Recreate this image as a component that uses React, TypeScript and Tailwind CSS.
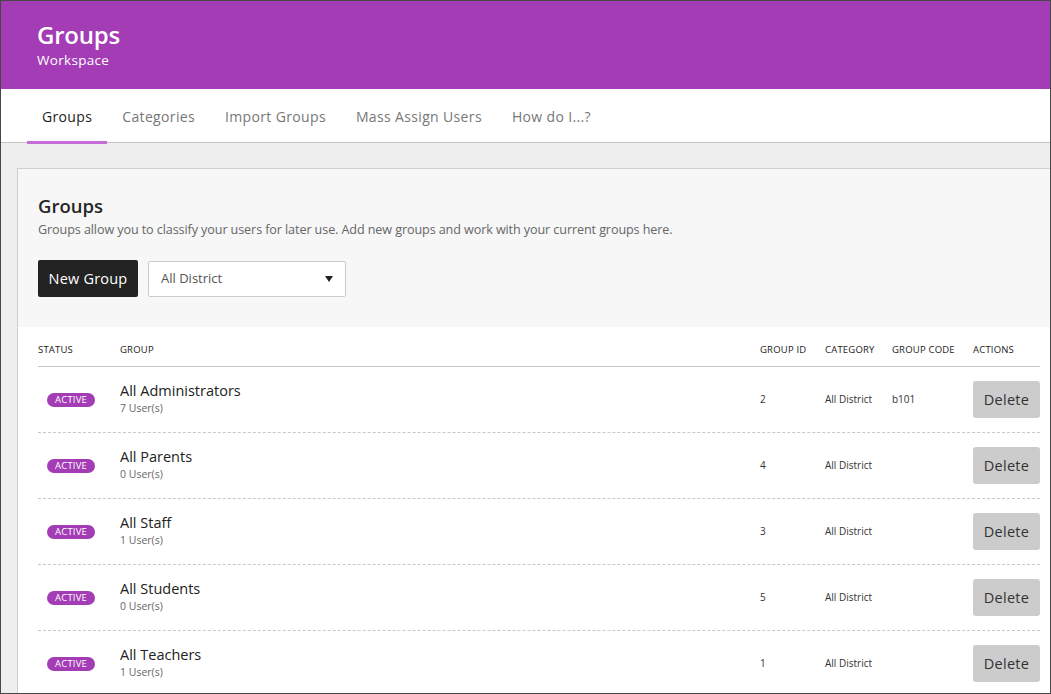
import React from 'react';

const tabs = ['Groups', 'Categories', 'Import Groups', 'Mass Assign Users', 'How do I...?'];

const groups = [
  { name: 'All Administrators', users: 7, id: 2, category: 'All District', code: 'b101' },
  { name: 'All Parents', users: 0, id: 4, category: 'All District', code: '' },
  { name: 'All Staff', users: 1, id: 3, category: 'All District', code: '' },
  { name: 'All Students', users: 0, id: 5, category: 'All District', code: '' },
  { name: 'All Teachers', users: 1, id: 1, category: 'All District', code: '' },
];

const cols = 'grid grid-cols-[82px_640px_65px_67px_81px_67px] items-center';

export default function App() {
  return (
    <div
      className="w-[1051px] h-[694px] overflow-hidden border border-[#474747] bg-[#eeeeee] flex flex-col"
      style={{ fontFamily: '"Open Sans", "Noto Sans", sans-serif' }}
    >
      {/* Header */}
      <div className="h-[88px] shrink-0 bg-[#a33cb5] pl-[36px] pt-[18px] text-white">
        <h1 className="text-[24px] leading-[32px] font-semibold tracking-[-0.2px]">Groups</h1>
        <div className="text-[13.5px] leading-[18px] tracking-[0.3px]">Workspace</div>
      </div>

      {/* Tabs */}
      <div className="h-[54px] shrink-0 bg-white border-b border-[#c4c4c4] flex pl-[26px]">
        {tabs.map((t, i) => (
          <div
            key={t}
            className={`px-[15px] pt-[18px] text-[14px] leading-[20px] tracking-[0.35px] border-b-[3px] -mb-[2px] ${
              i === 0 ? 'text-[#222] border-[#c86dd7]' : 'text-[#777] border-transparent'
            }`}
          >
            {t}
          </div>
        ))}
      </div>

      {/* Card */}
      <div className="mt-[25px] ml-[16px] flex-1 border-l border-t border-[#cfcfcf] bg-white">
        <div className="bg-[#f7f7f7] pl-[20px] pt-[24px] h-[158px]">
          <h2 className="text-[18.5px] leading-[26px] font-semibold text-[#262626]">Groups</h2>
          <p className="text-[12.6px] leading-[20px] text-[#666] mt-[1px] tracking-[-0.1px]">
            Groups allow you to classify your users for later use. Add new groups and work with your current groups here.
          </p>
          <div className="flex gap-[10px] mt-[20px]">
            <button className="h-[37px] w-[100px] bg-[#232323] text-white text-[14.5px] rounded-[2px] tracking-[0.2px]">
              New Group
            </button>
            <div className="h-[36px] w-[198px] mt-px bg-white border border-[#cccccc] rounded-[2px] flex items-center justify-between pl-[12px] pr-[12px] text-[13px] text-[#555]">
              <span>All District</span>
              <svg width="8" height="6" viewBox="0 0 8 6">
                <path d="M0 0h8L4 6z" fill="#222" />
              </svg>
            </div>
          </div>
        </div>

        {/* Table */}
        <div className="pl-[20px] w-[1022px]">
          <div className={`${cols} h-[40px] pt-[7px] border-b border-[#c8c8c8] text-[9.5px] text-[#222] tracking-[0.2px]`}>
            <div>STATUS</div>
            <div>GROUP</div>
            <div>GROUP ID</div>
            <div>CATEGORY</div>
            <div>GROUP CODE</div>
            <div>ACTIONS</div>
          </div>
          {groups.map((g) => (
            <div key={g.name} className={`${cols} h-[66px] border-b border-dashed border-[#c8c8c8]`}>
              <div className="pl-[9px] flex items-center">
                <span className="flex items-center justify-center w-[48px] h-[14px] rounded-full bg-[#a33cb5] text-white text-[9.5px] leading-none tracking-[0.2px]">
                  ACTIVE
                </span>
              </div>
              <div className="pb-[2px]">
                <div className="text-[14.5px] leading-[18px] font-medium text-[#222]">{g.name}</div>
                <div className="text-[10.5px] leading-[16px] text-[#666]">{g.users} User(s)</div>
              </div>
              <div className="text-[10px] text-[#333]">{g.id}</div>
              <div className="text-[10px] text-[#333]">{g.category}</div>
              <div className="text-[10px] text-[#333]">{g.code}</div>
              <div>
                <button className="w-[67px] h-[37px] bg-[#cccccc] rounded-[3px] text-[14.5px] text-[#333] tracking-[0.3px]">
                  Delete
                </button>
              </div>
            </div>
          ))}
        </div>
      </div>
    </div>
  );
}
